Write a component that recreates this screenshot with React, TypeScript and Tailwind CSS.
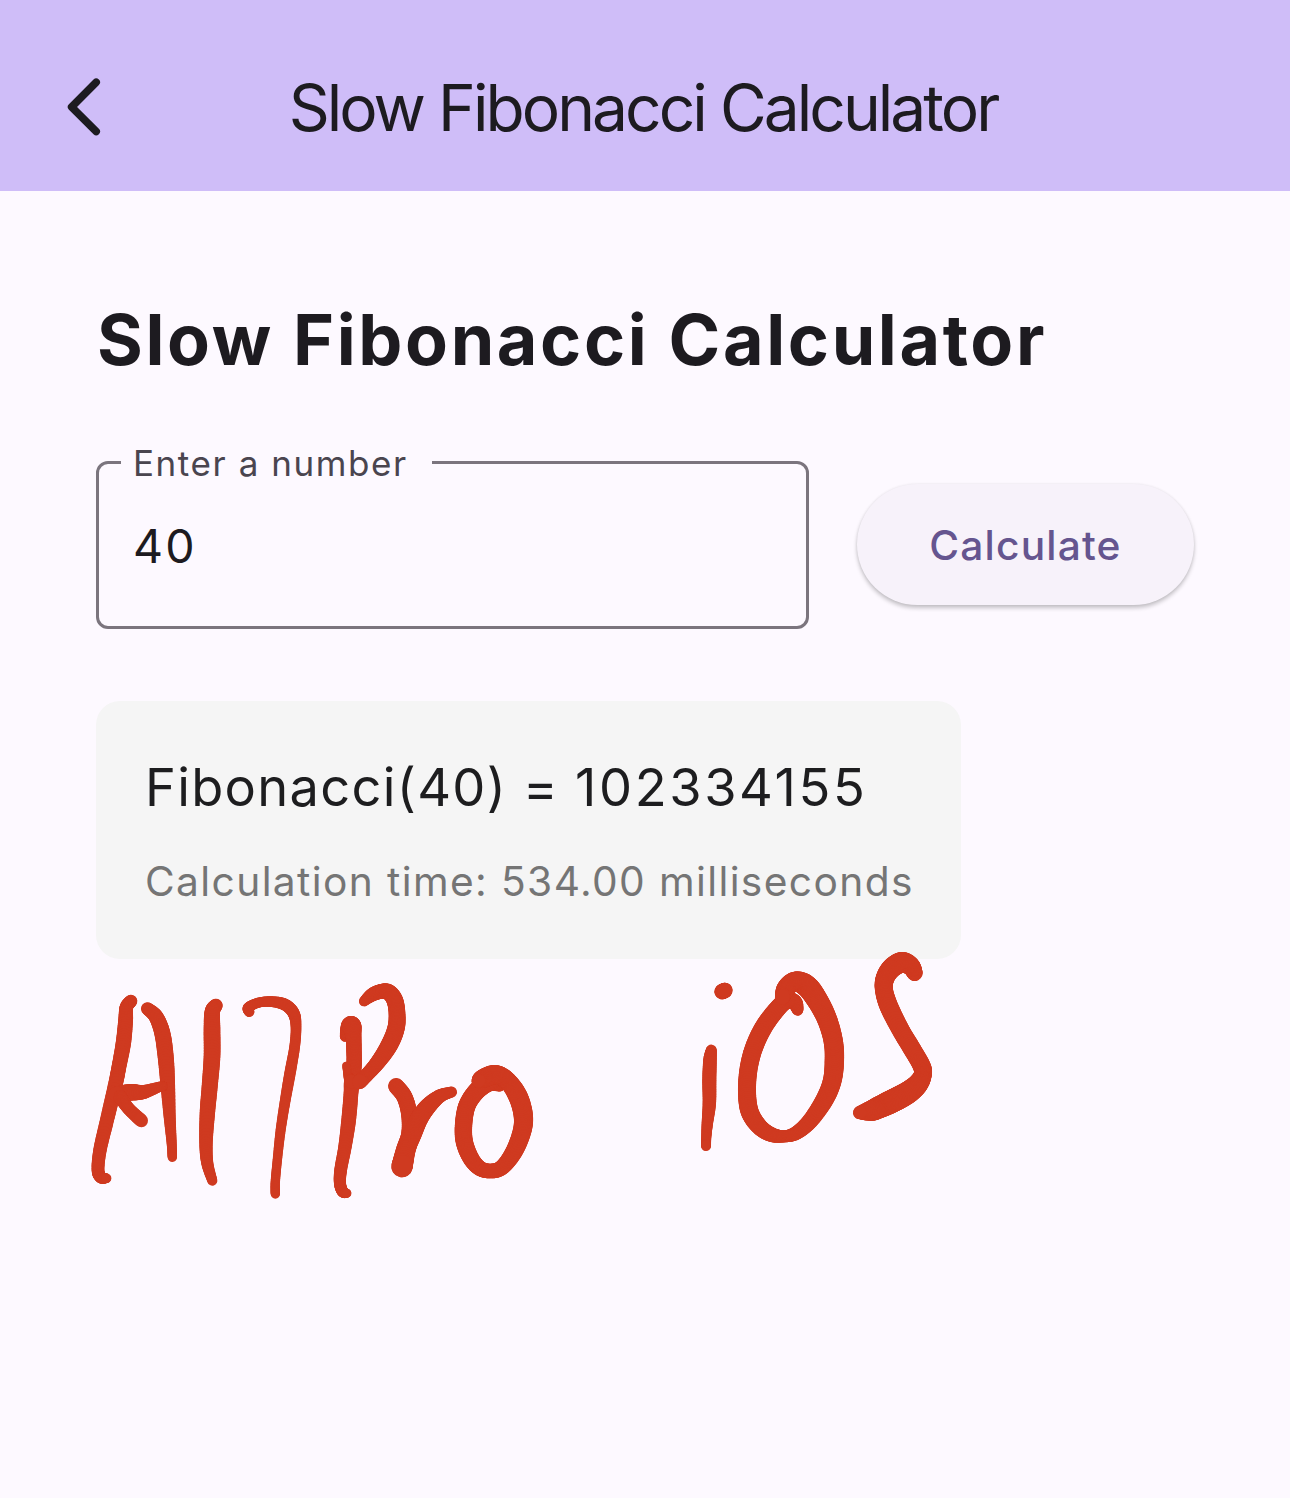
type InkPoint = [x: number, y: number, radius: number];
type InkGroup = { x: number; y: number; strokes: InkPoint[][] };

// Pen strokes, three units to a pixel, each point with its own brush radius.
const INK: InkGroup[] = [
  {
    x: 80,
    y: 970,
    strokes: [
      [[153,93,19],[139,112,20],[137,150,22],[130,220,23],[117,290,22],[107,340,22],[81,450,21],[60,540,20],[54,600,19],[63,622,18],[80,625,14]],
      [[202,116,19],[228,140,22],[247,190,24],[257,260,24],[263,340,22],[269,440,18],[275,520,15],[277,562,14]],
      [[250,349,14],[240,350,15],[190,366,21],[150,367,25],[108,372,22]],
      [[120,380,20],[145,415,19],[184,452,20]],
      [[408,106,20],[397,125,23],[396,180,25],[396,260,25],[389,350,24],[382,430,23],[378,520,20],[382,580,18],[397,632,15]],
      [[508,126,15],[505,113,16],[535,98,15],[575,95,16],[615,104,18],[641,130,18],[648,170,16],[644,230,16],[630,310,17],[616,390,16],[602,480,15],[592,570,14],[586,635,14],[586,672,14]],
    ],
  },
  {
    x: 310,
    y: 970,
    strokes: [
      [[105,200,15],[114,182,23],[124,167,29],[130,195,24],[132,240,23],[132,290,23],[125,335,23],[123,370,22],[116,450,22],[105,530,20],[92,600,19],[90,640,18],[98,665,17],[111,670,13]],
      [[109,287,12],[115,320,14],[124,335,20]],
      [[162,94,15],[185,75,20],[210,65,22],[235,66,24],[254,90,25],[261,130,25],[258,175,26],[238,225,26],[205,275,23],[172,313,21],[148,336,22]],
      [[258,348,24],[283,380,24],[297,430,24],[297,490,23],[286,540,28],[276,590,32]],
      [[425,366,16],[390,378,20],[355,408,25],[328,445,27],[308,490,28],[290,535,28],[276,590,32]],
      [[570,350,14],[540,335,28],[505,358,27],[474,400,26],[462,450,26],[462,510,26],[481,562,25],[508,594,23],[540,603,22],[575,593,23],[612,545,26],[637,480,28],[639,430,29],[622,375,29],[590,330,27],[555,314,29],[520,325,28],[505,333,20]],
    ],
  },
  {
    x: 690,
    y: 940,
    strokes: [
      [[96,155,23],[105,151,23]],
      [[64,330,16],[60,360,20],[58,420,21],[58,490,20],[52,550,17],[49,590,15],[48,618,15]],
      [[323,210,17],[314,187,23],[290,182,25],[263,205,26],[223,258,27],[193,320,27],[176,385,27],[171,455,27],[179,515,27],[208,560,25],[245,584,22],[285,589,18],[320,578,21],[360,543,24],[402,482,27],[426,425,28],[433,365,29],[430,305,29],[412,240,30],[383,182,32],[350,138,33],[315,124,29],[288,145,28],[277,172,22]],
      [[674,99,24],[662,78,28],[636,67,31],[605,84,30],[585,115,28],[582,150,27],[597,200,28],[632,270,27],[665,325,27],[695,378,27],[698,405,27],[682,434,31],[650,460,34],[605,484,35],[565,503,33],[543,512,30],[508,518,19]],
    ],
  },
];

const STEPS = 10;

function spline(a: number, b: number, c: number, d: number, t: number) {
  return 0.5 * (2 * b + (c - a) * t + (2 * a - 5 * b + 4 * c - d) * t * t + (3 * b - a - 3 * c + d) * t * t * t);
}

function brush(points: InkPoint[]): InkPoint[] {
  const out: InkPoint[] = [];
  for (let i = 0; i < points.length - 1; i++) {
    const p0 = points[Math.max(i - 1, 0)];
    const p1 = points[i];
    const p2 = points[i + 1];
    const p3 = points[Math.min(i + 2, points.length - 1)];
    for (let s = 0; s < STEPS; s++) {
      const t = s / STEPS;
      out.push([
        spline(p0[0], p1[0], p2[0], p3[0], t),
        spline(p0[1], p1[1], p2[1], p3[1], t),
        spline(p0[2], p1[2], p2[2], p3[2], t),
      ]);
    }
  }
  out.push(points[points.length - 1]);
  return out;
}

function InkStroke({ points }: { points: InkPoint[] }) {
  const dots = brush(points);
  return (
    <>
      {dots.slice(1).map(([x, y, r], i) => (
        <line key={i} x1={dots[i][0]} y1={dots[i][1]} x2={x} y2={y} strokeWidth={dots[i][2] + r} />
      ))}
    </>
  );
}

function Annotation() {
  return (
    <svg
      role="img"
      aria-label="A17 Pro iOS"
      viewBox="0 0 1290 1498"
      className="pointer-events-none absolute top-0 left-0 h-[1498px] w-[1290px]"
      stroke="#cf3a20"
      strokeLinecap="round"
      fill="none"
    >
      {INK.map((group) => (
        <g key={group.x} transform={`translate(${group.x} ${group.y}) scale(0.33333)`}>
          {group.strokes.map((points, i) => (
            <InkStroke key={i} points={points} />
          ))}
        </g>
      ))}
    </svg>
  );
}

export default function App() {
  return (
    <div className="relative h-[1498px] w-[1290px] overflow-hidden bg-[#fdf9ff] font-['Inter',sans-serif] text-[#1d1b20]">
      <header className="relative flex h-[191px] items-center justify-center bg-[#cfbdf8] pt-[25px]">
        <button aria-label="Back" className="absolute top-[71px] left-[48px] h-[72px] w-[72px]">
          <svg viewBox="0 0 72 72" className="h-full w-full" fill="none" stroke="#1d1b20" strokeWidth="7.6" strokeLinecap="round" strokeLinejoin="round">
            <path d="M48.2 11.3 23.6 36 48.2 60.5" />
          </svg>
        </button>
        <span className="pr-1 text-[64px] leading-[80px] tracking-[-2.94px] whitespace-nowrap">Slow Fibonacci Calculator</span>
      </header>

      <main className="flex flex-col items-start px-24 pt-[101px]">
        <h1 className="pl-px text-[70px] leading-[96px] font-bold tracking-[2.63px] whitespace-nowrap">Slow Fibonacci Calculator</h1>

        <div className="mt-[73px] flex items-center gap-12">
          <div className="relative flex h-[168px] w-[713px] items-center rounded-xl border-[3px] border-[#7b757e] pl-[34px]">
            <label className="absolute -top-[25px] left-[22px] w-[311px] bg-[#fdf9ff] pl-3 text-[35px] leading-[48px] tracking-[1.57px] whitespace-nowrap text-[#4a454f]">
              Enter a number
            </label>
            <span className="pt-0.5 text-[46.5px] leading-[60px] tracking-[2.2px]">40</span>
          </div>
          <button className="mb-px h-[121px] w-[337px] rounded-full bg-[#f7f2fa] pt-[3px] text-[40.7px] font-medium tracking-[1.17px] text-[#65558f] shadow-[0_3px_4px_rgba(0,0,0,0.22),0_0_3px_rgba(0,0,0,0.07)]">
            Calculate
          </button>
        </div>

        <section className="mt-[72px] flex h-[258px] w-[865px] flex-col rounded-3xl bg-[#f5f5f5] px-12 pt-[47px]">
          <p className="pl-px text-[52.4px] leading-[78px] tracking-[1.3px] whitespace-nowrap text-[#1d1d1f]">
            Fibonacci(40) = <span className="tracking-[2.6px]">102334155</span>
          </p>
          <p className="mt-[26px] pl-px text-[40.7px] leading-[60px] tracking-[1.38px] whitespace-nowrap text-[#757575]">Calculation time: 534.00 milliseconds</p>
        </section>
      </main>
      <Annotation />
    </div>
  );
}
